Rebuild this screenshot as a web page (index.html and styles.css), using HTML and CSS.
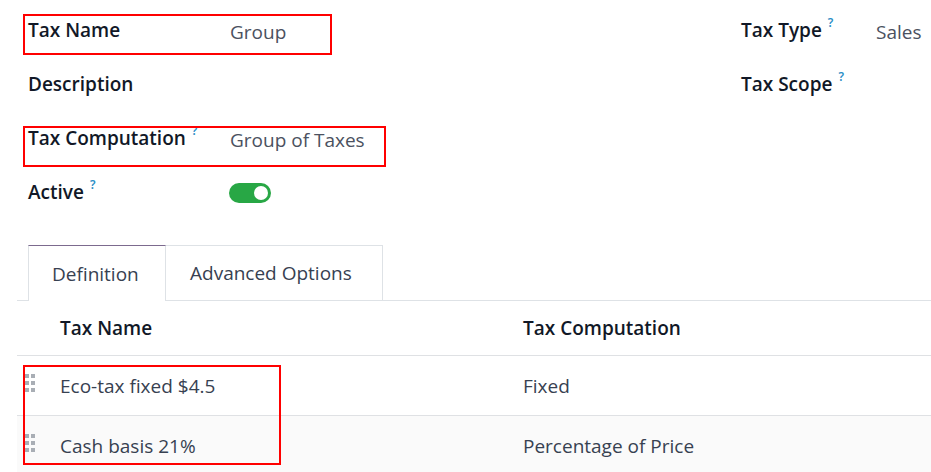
FILE: index.html
```html
<!DOCTYPE html>
<html lang="en">
<head>
<meta charset="utf-8">
<title>Tax</title>
<link rel="stylesheet" href="styles.css">
</head>
<body>
<div class="page">
  <div class="form">
    <div class="col col-left">
      <div class="field"><span class="label">Tax Name</span><span class="value">Group</span></div>
      <div class="field"><span class="label">Description</span><span class="value"></span></div>
      <div class="field"><span class="label">Tax Computation<sup class="help">?</sup></span><span class="value">Group of Taxes</span></div>
      <div class="field"><span class="label">Active<sup class="help">?</sup></span><span class="value"><span class="toggle"><span class="knob"></span></span></span></div>
    </div>
    <div class="col col-right">
      <div class="field"><span class="label">Tax Type<sup class="help">?</sup></span><span class="value">Sales</span></div>
      <div class="field"><span class="label">Tax Scope<sup class="help">?</sup></span><span class="value"></span></div>
    </div>
  </div>

  <div class="notebook">
    <div class="tabs">
      <div class="tab active">Definition</div>
      <div class="tab">Advanced Options</div>
    </div>
    <div class="table">
      <div class="tr thead">
        <div class="handle-cell"></div>
        <div class="td c1">Tax Name</div>
        <div class="td c2">Tax Computation</div>
      </div>
      <div class="tr">
        <div class="handle-cell"><span class="handle"><i></i><i></i><i></i><i></i><i></i><i></i></span></div>
        <div class="td c1">Eco-tax fixed $4.5</div>
        <div class="td c2">Fixed</div>
      </div>
      <div class="tr alt">
        <div class="handle-cell"><span class="handle"><i></i><i></i><i></i><i></i><i></i><i></i></span></div>
        <div class="td c1">Cash basis 21%</div>
        <div class="td c2">Percentage of Price</div>
      </div>
    </div>
  </div>

  <div class="mark mark-1"></div>
  <div class="mark mark-2"></div>
  <div class="mark mark-3"></div>
</div>
</body>
</html>
```

FILE: styles.css
```css
html, body {
  margin: 0;
  padding: 0;
  background: #ffffff;
}
body {
  font-family: "Open Sans", "Noto Sans", "Liberation Sans", sans-serif;
  font-size: 19px;
  color: #374151;
  width: 931px;
  height: 472px;
  overflow: hidden;
}
.page {
  position: relative;
  width: 931px;
  height: 472px;
}
.form {
  display: flex;
  padding: 4px 0 0 28px;
  height: 216px;
}
.col {
  display: flex;
  flex-direction: column;
}
.col-left {
  width: 713px;
}
.field {
  display: flex;
  align-items: center;
  height: 54px;
}
.col-left .label {
  width: 202px;
}
.col-right .label {
  width: 135px;
}
.label {
  font-weight: 600;
  color: #111827;
  white-space: nowrap;
  margin-top: -2px;
}
.value {
  color: #4b5160;
  margin-top: 2px;
  white-space: nowrap;
}
.help {
  font-family: "Noto Sans", sans-serif;
  font-size: 12px;
  font-weight: 600;
  color: #2b8ec6;
  margin-left: 6px;
  vertical-align: 10px;
  line-height: 0;
}
.toggle {
  display: flex;
  align-items: center;
  justify-content: flex-end;
  width: 42px;
  height: 20px;
  border-radius: 10px;
  background: #28a745;
  padding: 0 3px;
  box-sizing: border-box;
  margin-top: -2px;
  margin-left: -1px;
}
.knob {
  width: 14px;
  height: 14px;
  border-radius: 50%;
  background: #ffffff;
}
.notebook {
  margin: 25px 0 0 17px;
}
.tabs {
  display: flex;
  padding-left: 11px;
  border-bottom: 1px solid #dee2e6;
  height: 55px;
}
.tab {
  display: flex;
  align-items: center;
  padding: 0 24px;
  border: 1px solid #dee2e6;
  border-bottom: none;
  color: #374151;
  height: 55px;
  box-sizing: border-box;
  margin-bottom: -1px;
}
.tab.active {
  border-top: 1px solid #7c6a8e;
  background: #ffffff;
  height: 56px;
  padding: 0 23px;
  width: 138px;
}
.tab + .tab {
  border-left: none;
  width: 217px;
  padding: 0 24px;
}
.table {
  display: flex;
  flex-direction: column;
}
.tr {
  display: flex;
  align-items: center;
  height: 59px;
  border-bottom: 1px solid #dfe1e4;
}
.tr.thead {
  height: 54px;
  font-weight: 600;
  color: #111827;
}
.tr.alt {
  background: #fafafa;
  border-bottom: none;
}
.handle-cell {
  width: 43px;
  display: flex;
  align-items: center;
  padding-left: 8px;
  box-sizing: border-box;
}
.handle {
  display: grid;
  grid-template-columns: 4px 4px;
  grid-auto-rows: 4px;
  gap: 3px 2px;
  margin-top: -6px;
}
.handle i {
  display: block;
  background: #a9aeb5;
}
.td {
  white-space: nowrap;
}
.c1 {
  width: 463px;
}
.c2 {
  flex: 1;
}
.mark {
  position: absolute;
  border: 2px solid #ff0000;
  box-sizing: border-box;
  pointer-events: none;
}
.mark-1 {
  left: 23px;
  top: 14px;
  width: 309px;
  height: 41px;
}
.mark-2 {
  left: 23px;
  top: 126px;
  width: 363px;
  height: 41px;
}
.mark-3 {
  left: 23px;
  top: 365px;
  width: 258px;
  height: 100px;
}
```
